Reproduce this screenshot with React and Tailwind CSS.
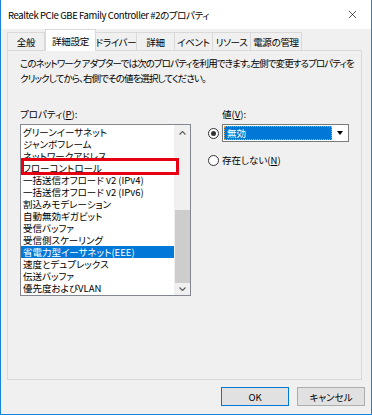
import { X } from "lucide-react";

const TABS = ["全般", "詳細設定", "ドライバー", "詳細", "イベント", "リソース", "電源の管理"];
const TAB_W = [38, 51, 42, 39, 39, 39, 52];

const ITEMS = [
  "グリーンイーサネット",
  "ジャンボフレーム",
  "ネットワークアドレス",
  "フローコントロール",
  "一括送信オフロード v2 (IPv4)",
  "一括送信オフロード v2 (IPv6)",
  "割込みモデレーション",
  "自動無効ギガビット",
  "受信バッファ",
  "受信側スケーリング",
  "省電力型イーサネット(EEE)",
  "速度とデュプレックス",
  "伝送バッファ",
  "優先度およびVLAN",
];

function Radio({ checked }) {
  return (
    <span className="flex h-[11px] w-[11px] items-center justify-center rounded-full border border-[#333] bg-white">
      {checked ? <span className="h-[5px] w-[5px] rounded-full bg-[#333]" /> : null}
    </span>
  );
}

export default function App() {
  return (
    <div
      className="flex h-[415px] w-[372px] flex-col border border-t-0 border-[#1883d7] bg-[#f0f0f0] text-[9.5px] leading-[12px] text-black antialiased [font-feature-settings:'palt']"
      style={{ fontFamily: '"Noto Sans CJK JP", "Noto Sans", sans-serif' }}
    >
      <div className="flex h-[29px] items-center justify-between bg-white pl-[7px] pr-[12px] text-[9.5px]">
        <span className="tracking-[-0.4px]">Realtek PCIe GBE Family Controller #2のプロパティ</span>
        <X size={13} strokeWidth={1.2} />
      </div>

      <div className="flex h-[21px] items-end pl-[6px]">
        {TABS.map((t, i) => {
          const sel = i === 1;
          return (
            <div
              key={t}
              style={{ width: TAB_W[i] }}
              className={`flex items-center justify-center whitespace-nowrap border border-b-0 border-[#d9d9d9] tracking-[-0.3px] ${
                sel ? "relative z-10 -mb-px h-[22px] bg-white" : "-ml-px h-[18px] bg-[#f0f0f0] first:ml-0"
              }`}
            >
              {t}
            </div>
          );
        })}
      </div>

      <div className="ml-[6px] h-[330px] w-[355px] border border-[#d9d9d9] bg-[#f0f0f0] px-[12px] pt-[5px]">
        <p className="whitespace-nowrap leading-[15px] tracking-[-0.9px]">
          このネットワーク アダプターでは次のプロパティを利用できます。左側で変更するプロパティを
          <br />
          クリックしてから、右側でその値を選択してください。
        </p>

        <div className="mt-[22px] flex">
          <div className="w-[175px]">
            <div className="mb-[4px]">
              プロパティ(<span className="underline">P</span>):
            </div>
            <div className="relative flex h-[172px] border border-[#828790] bg-white">
              <div className="flex-1 pt-px">
                {ITEMS.map((it, i) => (
                  <div
                    key={it}
                    className={`h-[12px] whitespace-nowrap pl-[2px] leading-[12px] ${
                      i === 10 ? "bg-[#0078d7] text-white" : ""
                    } ${i === 3 ? "relative z-20" : ""}`}
                  >
                    {it}
                  </div>
                ))}
              </div>
              <div className="flex w-[16px] flex-col items-center bg-[#f0f0f0]">
                <div className="flex h-[16px] items-center">
                  <svg width="7" height="4" viewBox="0 0 7 4">
                    <path d="M0.5 3.5 L3.5 0.5 L6.5 3.5" fill="none" stroke="#606060" strokeWidth="1.2" />
                  </svg>
                </div>
                <div className="mt-[69px] h-[73px] w-[15px] bg-[#cdcdcd]" />
                <div className="flex h-[12px] items-center">
                  <svg width="7" height="4" viewBox="0 0 7 4">
                    <path d="M0.5 0.5 L3.5 3.5 L6.5 0.5" fill="none" stroke="#606060" strokeWidth="1.2" />
                  </svg>
                </div>
              </div>
              <div className="absolute left-0 top-[33px] z-10 h-[17px] w-[158px] border-[3px] border-[#e60012] bg-white" />
            </div>
          </div>

          <div className="ml-[17px] flex-1">
            <div className="mb-[4px] pl-[14px]">
              値(<span className="underline">V</span>):
            </div>
            <div className="flex items-center gap-[3px]">
              <Radio checked />
              <div className="flex h-[18px] w-[127px] items-center border border-[#7a7a7a] bg-white p-px">
                <div className="flex h-full flex-1 items-center border border-dotted border-[#e8a13c] bg-[#0078d7] pl-[2px] text-white">
                  無効
                </div>
                <div className="flex h-full w-[15px] items-center justify-center">
                  <span className="border-x-[3.5px] border-t-[4px] border-x-transparent border-t-black" />
                </div>
              </div>
            </div>
            <div className="mt-[12px] flex items-center gap-[3px]">
              <Radio />
              <span>
                存在しない(<span className="underline">N</span>)
              </span>
            </div>
          </div>
        </div>
      </div>

      <div className="mt-[7px] flex justify-end gap-[8px] pr-[6px]">
        <button className="flex h-[19px] w-[68px] items-center justify-center border border-[#0078d7] bg-[#e1e1e1]">
          OK
        </button>
        <button className="flex h-[19px] w-[68px] items-center justify-center border border-[#adadad] bg-[#e1e1e1]">
          キャンセル
        </button>
      </div>
    </div>
  );
}
